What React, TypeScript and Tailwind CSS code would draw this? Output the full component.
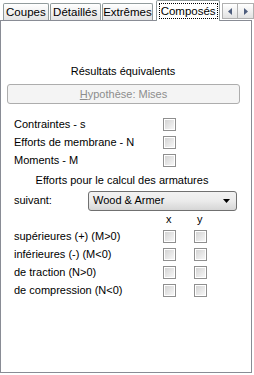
import React from 'react'

const FONT = { fontFamily: '"Liberation Sans", Arial, sans-serif' }

const Check: React.FC = () => (
  <div className="w-[13px] h-[13px] border border-[#8f8f8f] bg-white p-px">
    <div className="w-full h-full bg-gradient-to-br from-[#d4d4d4] to-[#f6f6f6]" />
  </div>
)

const TABS = [
  { label: 'Coupes', w: 'w-[46px]' },
  { label: 'Détaillés', w: 'w-[51px]' },
  { label: 'Extrêmes', w: 'w-[52px]' },
]

const ROWS = ['Contraintes - s', 'Efforts de membrane - N', 'Moments - M']

const ARMATURES = [
  'supérieures (+) (M>0)',
  'inférieures (-) (M<0)',
  'de traction (N>0)',
  'de compression (N<0)',
]

export default function App() {
  return (
    <div className="w-[254px] h-[375px] bg-white text-[11px] text-black leading-[13px]" style={FONT}>
      {/* onglets */}
      <div className="flex items-end h-[20px] pl-[3px] gap-[1px] text-[11.5px]">
        {TABS.map((t) => (
          <div
            key={t.label}
            className={`${t.w} h-[17px] flex items-center justify-center border border-b-0 border-[#919b9c] bg-gradient-to-b from-white to-[#e4e4e4] rounded-t-[2px] whitespace-nowrap`}
          >
            {t.label}
          </div>
        ))}
        <div className="relative z-10 w-[64px] h-[21px] -mb-px ml-[2px] flex items-center justify-center border border-b-0 border-[#919b9c] bg-white rounded-t-[2px] whitespace-nowrap">
          <span className="px-[1px] border border-dotted border-black leading-[14px]">Composés</span>
        </div>
        <div className="flex self-start mt-[3px] ml-[1px]">
          <div className="w-[16px] h-[16px] border border-[#b0b0b0] bg-gradient-to-b from-white to-[#e2e2e2] flex items-center justify-center">
            <svg width="4" height="7" viewBox="0 0 4 7"><path d="M4 0 L0 3.5 L4 7 Z" fill="#4e5d7d" /></svg>
          </div>
          <div className="w-[16px] h-[16px] border border-l-0 border-[#b0b0b0] bg-gradient-to-b from-white to-[#e2e2e2] flex items-center justify-center">
            <svg width="4" height="7" viewBox="0 0 4 7"><path d="M0 0 L4 3.5 L0 7 Z" fill="#4e5d7d" /></svg>
          </div>
        </div>
      </div>

      {/* panneau */}
      <div className="w-[252px] h-[353px] border border-[#898c95] bg-white pt-[41px]">
        <div className="h-[18px] flex items-center justify-center pr-[6px]">Résultats équivalents</div>
        <div className="mx-[6px] mt-[4px] w-[233px] h-[20px] border border-[#adadad] rounded-[3px] bg-[#f4f4f4] flex items-center justify-center text-[#8d8d8d]">
          <span><span className="underline">H</span>ypothèse: Mises</span>
        </div>

        <div className="mt-[11px]">
          {ROWS.map((r) => (
            <div key={r} className="h-[18px] flex items-center pl-[13px]">
              <span className="w-[149px]">{r}</span>
              <Check />
            </div>
          ))}
        </div>

        <div className="h-[20px] mt-[1px] flex items-center justify-center pr-[8px]">
          Efforts pour le calcul des armatures
        </div>

        <div className="h-[21px] flex items-center pl-[13px]">
          <span className="w-[74px]">suivant:</span>
          <div className="w-[149px] h-[20px] border border-[#707070] rounded-[3px] bg-gradient-to-b from-[#f2f2f2] via-[#ebebeb] to-[#d6d6d6] flex items-center justify-between pl-[4px] pr-[6px]">
            <span>Wood &amp; Armer</span>
            <svg width="7" height="4" viewBox="0 0 7 4"><path d="M0 0 H7 L3.5 4 Z" fill="#000" /></svg>
          </div>
        </div>

        <div className="h-[16px] flex items-center pl-[13px]">
          <span className="w-[149px]" />
          <span className="w-[31px] pl-[3px]">x</span>
          <span className="pl-[3px]">y</span>
        </div>

        {ARMATURES.map((a) => (
          <div key={a} className="h-[18px] flex items-center pl-[13px]">
            <span className="w-[149px]">{a}</span>
            <div className="w-[31px]">
              <Check />
            </div>
            <Check />
          </div>
        ))}
      </div>
    </div>
  )
}
